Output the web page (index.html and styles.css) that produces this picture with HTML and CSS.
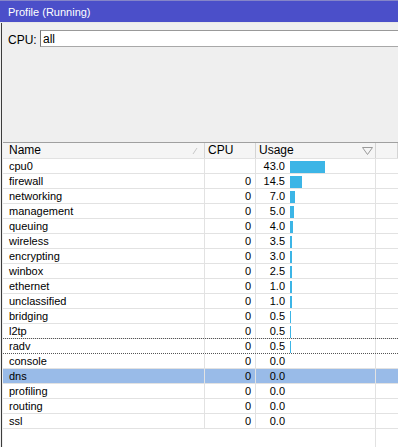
FILE: index.html
```html
<!DOCTYPE html>
<html>
<head>
<meta charset="utf-8">
<link rel="stylesheet" href="styles.css">
</head>
<body>
<div class="window">
  <div class="titlebar">Profile (Running)</div>
  <div class="content">
    <div class="filter">
      <label class="filter-label">CPU:</label>
      <div class="filter-input">all</div>
    </div>
    <div class="table">
      <div class="row head">
        <div class="cell name">Name<svg class="sort-name" width="6" height="8" viewBox="0 0 6 8"><path d="M1 7 L5 1" stroke="#c8c8c8" fill="none"/></svg></div>
        <div class="cell cpu">CPU</div>
        <div class="cell usage">Usage<svg class="sort-usage" width="11" height="8" viewBox="0 0 11 8"><path d="M0.5 0.5 H10.5 L5.5 7.5 Z" stroke="#9a9a9a" fill="none"/></svg></div>
        <div class="cell fill"></div>
      </div>
      <div class="row"><div class="cell name">cpu0</div><div class="cell cpu"></div><div class="cell usage"><span class="num">43.0</span><span class="bar" style="width:35px"></span></div><div class="cell fill"></div></div>
      <div class="row"><div class="cell name">firewall</div><div class="cell cpu">0</div><div class="cell usage"><span class="num">14.5</span><span class="bar" style="width:12px"></span></div><div class="cell fill"></div></div>
      <div class="row"><div class="cell name">networking</div><div class="cell cpu">0</div><div class="cell usage"><span class="num">7.0</span><span class="bar" style="width:5px"></span></div><div class="cell fill"></div></div>
      <div class="row"><div class="cell name">management</div><div class="cell cpu">0</div><div class="cell usage"><span class="num">5.0</span><span class="bar" style="width:4px"></span></div><div class="cell fill"></div></div>
      <div class="row"><div class="cell name">queuing</div><div class="cell cpu">0</div><div class="cell usage"><span class="num">4.0</span><span class="bar" style="width:3px"></span></div><div class="cell fill"></div></div>
      <div class="row"><div class="cell name">wireless</div><div class="cell cpu">0</div><div class="cell usage"><span class="num">3.5</span><span class="bar" style="width:2px"></span></div><div class="cell fill"></div></div>
      <div class="row"><div class="cell name">encrypting</div><div class="cell cpu">0</div><div class="cell usage"><span class="num">3.0</span><span class="bar" style="width:2px"></span></div><div class="cell fill"></div></div>
      <div class="row"><div class="cell name">winbox</div><div class="cell cpu">0</div><div class="cell usage"><span class="num">2.5</span><span class="bar" style="width:2px"></span></div><div class="cell fill"></div></div>
      <div class="row"><div class="cell name">ethernet</div><div class="cell cpu">0</div><div class="cell usage"><span class="num">1.0</span><span class="bar" style="width:2px"></span></div><div class="cell fill"></div></div>
      <div class="row"><div class="cell name">unclassified</div><div class="cell cpu">0</div><div class="cell usage"><span class="num">1.0</span><span class="bar" style="width:2px"></span></div><div class="cell fill"></div></div>
      <div class="row"><div class="cell name">bridging</div><div class="cell cpu">0</div><div class="cell usage"><span class="num">0.5</span><span class="bar" style="width:1px"></span></div><div class="cell fill"></div></div>
      <div class="row"><div class="cell name">l2tp</div><div class="cell cpu">0</div><div class="cell usage"><span class="num">0.5</span><span class="bar" style="width:1px"></span></div><div class="cell fill"></div></div>
      <div class="row focused"><div class="cell name">radv</div><div class="cell cpu">0</div><div class="cell usage"><span class="num">0.5</span><span class="bar" style="width:1px"></span></div><div class="cell fill"></div></div>
      <div class="row"><div class="cell name">console</div><div class="cell cpu">0</div><div class="cell usage"><span class="num">0.0</span></div><div class="cell fill"></div></div>
      <div class="row selected"><div class="cell name">dns</div><div class="cell cpu">0</div><div class="cell usage"><span class="num">0.0</span></div><div class="cell fill"></div></div>
      <div class="row"><div class="cell name">profiling</div><div class="cell cpu">0</div><div class="cell usage"><span class="num">0.0</span></div><div class="cell fill"></div></div>
      <div class="row"><div class="cell name">routing</div><div class="cell cpu">0</div><div class="cell usage"><span class="num">0.0</span></div><div class="cell fill"></div></div>
      <div class="row"><div class="cell name">ssl</div><div class="cell cpu">0</div><div class="cell usage"><span class="num">0.0</span></div><div class="cell fill"></div></div>
      <div class="row filler"><div class="cell name"></div><div class="cell cpu"></div><div class="cell usage"></div><div class="cell fill"></div></div>
    </div>
  </div>
</div>
</body>
</html>
```
FILE: styles.css
```css
html, body {
  margin: 0;
  padding: 0;
  height: 100%;
  overflow: hidden;
}
body {
  font-family: "Liberation Sans", Arial, sans-serif;
  font-size: 11px;
  color: #000;
  background: #efefef;
}
.window {
  display: flex;
  flex-direction: column;
  height: 447px;
}
.titlebar {
  height: 21px;
  background: #4b4fc9;
  border-top: 1px solid #8585c8;
  border-bottom: 1px solid #e8e8e8;
  color: #fff;
  font-size: 11px;
  line-height: 22px;
  padding-left: 8px;
}
.content {
  flex: 1;
  display: flex;
  flex-direction: column;
  margin-left: 1px;
  border-left: 1px solid #3c3c3c;
  background: #efefef;
}
.filter {
  display: flex;
  align-items: center;
  height: 17px;
  margin-top: 7px;
  padding-left: 6px;
}
.filter-label {
  font-size: 12px;
  width: 32px;
  padding-top: 2px;
}
.filter-input {
  flex: 1;
  height: 15px;
  background: #fff;
  border-top: 1px solid #999;
  border-bottom: 1px solid #a8a8a8;
  border-left: 1px solid #777;
  padding-left: 2px;
  line-height: 16px;
  font-size: 12px;
}
.table {
  flex: 1;
  display: flex;
  flex-direction: column;
  margin-top: 95px;
  margin-left: 1px;
  border-top: 1px solid #a0a0a0;
  background: #fff;
}
.row {
  display: grid;
  grid-template-columns: 202px 51px 120px 1fr;
  height: 15px;
  box-sizing: border-box;
  border-bottom: 1px solid #e2e2e2;
}
.cell {
  box-sizing: border-box;
  border-right: 1px solid #e2e2e2;
  line-height: 14px;
  white-space: nowrap;
  overflow: hidden;
}
.cell.fill {
  border-right: none;
}
.name {
  padding-left: 6px;
  position: relative;
}
.cpu {
  text-align: right;
  padding-right: 4px;
}
.usage {
  display: flex;
  align-items: flex-end;
  position: relative;
}
.num {
  width: 29px;
  text-align: right;
  align-self: center;
}
.bar {
  display: block;
  height: 12px;
  margin-left: 5px;
  background: #3cb5e6;
}
.head {
  background: #f5f5f5;
  height: 16px;
  border-bottom: 1px solid #e2e2e2;
}
.head .cell {
  border-right: 1px solid #d4d4d4;
  line-height: 15px;
  font-size: 12px;
}
.head .cpu {
  text-align: left;
  padding-left: 3px;
}
.head .usage {
  padding-left: 3px;
  align-items: center;
}
.sort-name {
  position: absolute;
  right: 6px;
  top: 4px;
}
.sort-usage {
  position: absolute;
  right: 2px;
  top: 4px;
}
.focused {
  border-top: 1px dotted #555;
  border-bottom: 1px dotted #555;
  margin-top: -1px;
  height: 16px;
}
.selected {
  background: #99bbe8;
}
.filler {
  flex: 1;
  height: auto;
  border-bottom: none;
}
.filler .name, .filler .cpu {
  border-right: none;
}
```
